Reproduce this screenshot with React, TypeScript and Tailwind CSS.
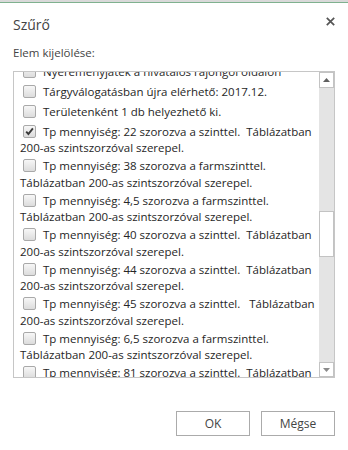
import React from "react";

type Item = { lines: string[]; checked?: boolean };

const items: Item[] = [
  { lines: ["Nyereményjáték a hivatalos rajongói oldalon"] },
  { lines: ["Tárgyválogatásban újra elérhető: 2017.12."] },
  { lines: ["Területenként 1 db helyezhető ki."] },
  { lines: ["Tp mennyiség: 22 szorozva a szinttel.  Táblázatban", "200-as szintszorzóval szerepel."], checked: true },
  { lines: ["Tp mennyiség: 38 szorozva a farmszinttel.", "Táblázatban 200-as szintszorzóval szerepel."] },
  { lines: ["Tp mennyiség: 4,5 szorozva a farmszinttel.", "Táblázatban 200-as szintszorzóval szerepel."] },
  { lines: ["Tp mennyiség: 40 szorozva a szinttel.  Táblázatban", "200-as szintszorzóval szerepel."] },
  { lines: ["Tp mennyiség: 44 szorozva a szinttel.  Táblázatban", "200-as szintszorzóval szerepel."] },
  { lines: ["Tp mennyiség: 45 szorozva a szinttel.   Táblázatban", "200-as szintszorzóval szerepel."] },
  { lines: ["Tp mennyiség: 6,5 szorozva a farmszinttel.", "Táblázatban 200-as szintszorzóval szerepel."] },
  { lines: ["Tp mennyiség: 81 szorozva a szinttel.  Táblázatban", "200-as szintszorzóval szerepel."] },
];

function CheckBox({ checked }: { checked?: boolean }) {
  return (
    <span className="w-[13px] h-[13px] shrink-0 rounded-[2px] border border-[#a9a9a9] bg-gradient-to-b from-[#f7f7f7] to-[#dcdcdc] flex items-center justify-center">
      {checked && (
        <svg width="9" height="9" viewBox="0 0 9 9">
          <path d="M1.2 4.6 L3.4 7 L7.9 1.4" fill="none" stroke="#3a3a3a" strokeWidth="1.9" />
        </svg>
      )}
    </span>
  );
}

function Arrow({ up, color }: { up?: boolean; color: string }) {
  return (
    <svg width="7" height="4" viewBox="0 0 7 4">
      <path d={up ? "M0 4 L3.5 0 L7 4 Z" : "M0 0 L3.5 4 L7 0 Z"} fill={color} />
    </svg>
  );
}

export default function App() {
  return (
    <div className="w-[348px] h-[450px] bg-white overflow-hidden flex flex-col text-[#444] font-['Open_Sans',sans-serif]">
      <div className="h-[2px] bg-[#d9d9d9]" />
      <div className="h-px bg-[#7fb18f]" />

      <div className="flex items-start justify-between pl-[13px] pr-[13px] pt-[11px]">
        <h1 className="text-[14px] leading-[22px] text-[#444]">Szűrő</h1>
        <svg width="9" height="9" viewBox="0 0 9 9" className="mt-[3px]">
          <path d="M0.8 0.8 L8.2 8.2 M8.2 0.8 L0.8 8.2" stroke="#555" strokeWidth="1.7" />
        </svg>
      </div>

      <p className="pl-[13px] mt-[9px] text-[11.5px] leading-[16px]">Elem kijelölése:</p>

      <div className="ml-[13px] mt-[10px] w-[322px] h-[307px] shrink-0 border border-[#c6c6c6] flex">
        <div className="flex-1 overflow-hidden">
          <div className="-mt-[11px] pl-[6px] text-[11.5px] text-[#262626]">
            {items.map((it, i) => (
              <div key={i}>
                <div className="h-[20px] flex items-center whitespace-pre">
                  <span className="ml-[3px] mr-[7px]">
                    <CheckBox checked={it.checked} />
                  </span>
                  <span className="leading-[15px]">{it.lines[0]}</span>
                </div>
                {it.lines[1] && (
                  <div className="h-[14.5px] leading-[14.5px] whitespace-pre">{it.lines[1]}</div>
                )}
              </div>
            ))}
          </div>
        </div>
        <div className="w-[15px] shrink-0 bg-[#e4e4e4] flex flex-col">
          <div className="h-[16px] bg-white border border-[#c3c3c3] flex items-center justify-center">
            <Arrow up color="#606060" />
          </div>
          <div className="h-[123px]" />
          <div className="h-[46px] bg-white border border-[#c3c3c3]" />
          <div className="flex-1" />
          <div className="h-[15px] bg-white border border-[#c3c3c3] flex items-center justify-center">
            <Arrow color="#8a8a8a" />
          </div>
        </div>
      </div>

      <div className="flex justify-end gap-[11px] pr-[13px] mt-[33px]">
        <button className="w-[74px] h-[25px] border border-[#ababab] bg-white text-[12px] text-[#444]">OK</button>
        <button className="w-[74px] h-[25px] border border-[#ababab] bg-white text-[12px] text-[#444]">Mégse</button>
      </div>
    </div>
  );
}
